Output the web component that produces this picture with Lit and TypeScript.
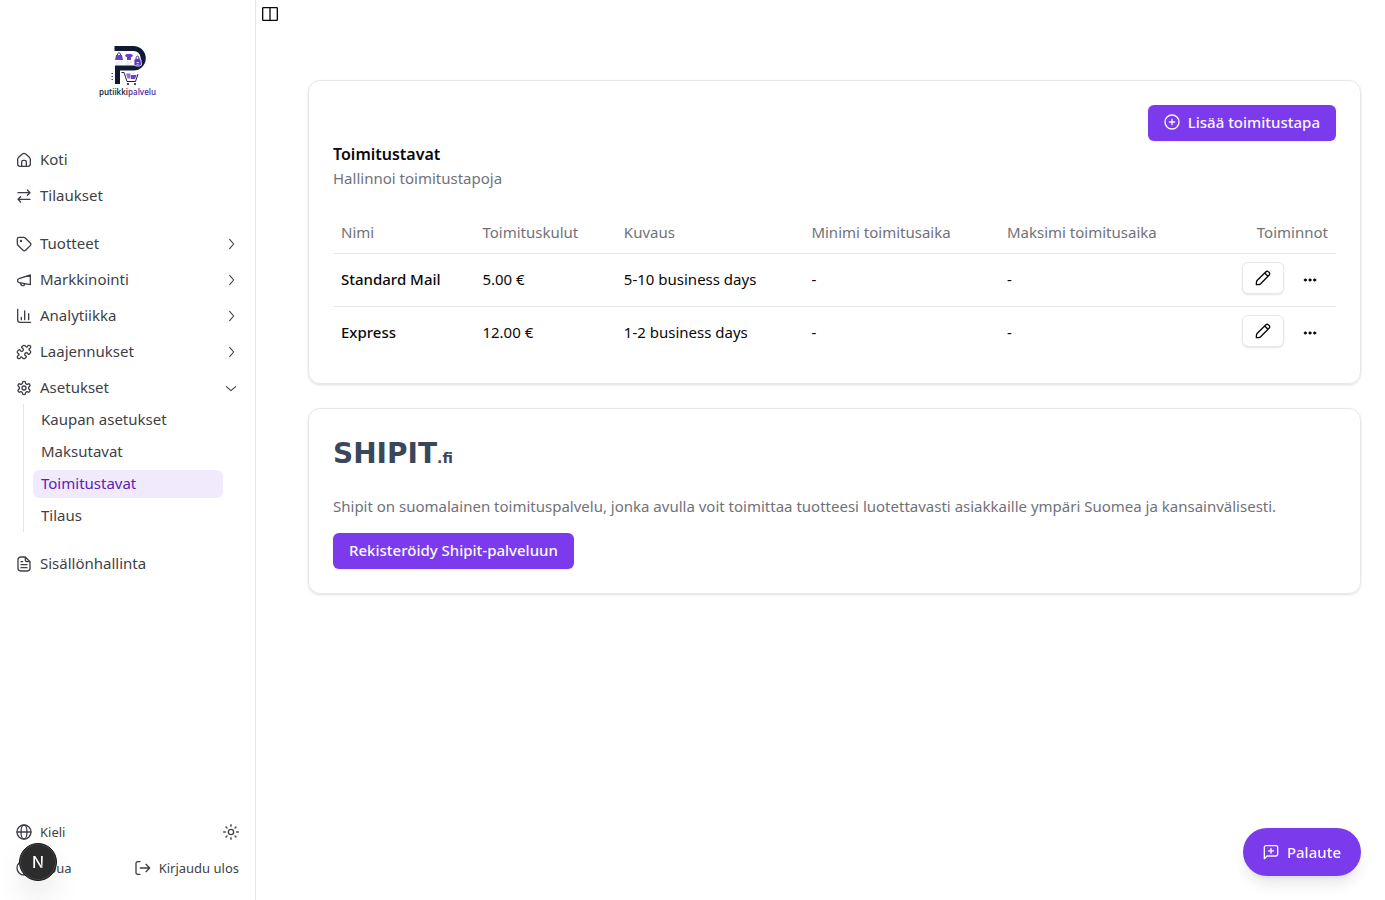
import { LitElement, html, css, svg, nothing, type TemplateResult } from "lit";
import { customElement, property } from "lit/decorators.js";
import { classMap } from "lit/directives/class-map.js";

const ICONS: Record<string, TemplateResult> = {
  home: svg`<path d="M2.500 11c0-1.400.4-2.200 1.500-3.200L9.500 3c1.600-1.300 3.400-1.300 5 0L20 7.800c1.100 1 1.500 1.800 1.500 3.200V18c0 2.500-1 3.500-3.500 3.500H6c-2.500 0-3.500-1-3.500-3.500z"/><path d="M8.500 21.500V15c0-1.700.8-2.500 2.500-2.500h2c1.700 0 2.500.8 2.500 2.500v6.500"/>`,
  swap: svg`<path d="M3 7h18M17 3l4 4-4 4M21 17H3M7 13l-4 4 4 4"/>`,
  tag: svg`<path d="M2 4.500A2.500 2.500 0 0 1 4.500 2h7.200c.8 0 1.500.3 2.100.9l7.600 7.600c1.200 1.200 1.200 2.700 0 3.900l-7 7c-1.200 1.200-2.700 1.200-3.900 0l-7.600-7.600c-.6-.6-.9-1.300-.9-2.100z"/><circle cx="7.500" cy="7.500" r=".8" fill="currentColor"/>`,
  megaphone: svg`<path d="M21.500 4.500v14.500L4.500 16c-1.300-.3-2-1-2-2.200v-1.600c0-1.200.7-1.900 2-2.200z"/><path d="M7 16.500c0 2.500 1 4 3 4s3-1 3-3"/>`,
  chart: svg`<path d="M2.500 2v16c0 2.500 1 3.500 3.500 3.500h16M8 17.500V14M13 17.500V4.500M19 17.500V8.500"/>`,
  puzzle: svg`<path d="M19.439 7.850c-.049.322.059.648.289.878l1.568 1.568c.47.470.706 1.087.706 1.704s-.235 1.233-.706 1.704l-1.611 1.611a.98.98 0 0 1-.837.276c-.470-.070-.802-.480-.968-.925a2.501 2.501 0 1 0-3.214 3.214c.446.166.855.497.925.968a.979.979 0 0 1-.276.837l-1.610 1.610a2.404 2.404 0 0 1-1.705.707 2.402 2.402 0 0 1-1.704-.706l-1.568-1.568a1.026 1.026 0 0 0-.877-.290c-.493.074-.840.504-1.020.968a2.500 2.500 0 1 1-3.237-3.237c.464-.180.894-.527.967-1.020a1.026 1.026 0 0 0-.289-.877l-1.568-1.568A2.402 2.402 0 0 1 1.998 12c0-.617.236-1.234.706-1.704L4.230 8.770c.240-.240.581-.353.917-.303.515.077.877.528 1.073 1.010a2.500 2.500 0 1 0 3.259-3.259c-.482-.196-.933-.558-1.010-1.073-.050-.336.062-.676.303-.917l1.525-1.525A2.402 2.402 0 0 1 12 1.998c.617 0 1.234.236 1.704.706l1.568 1.568c.230.230.556.338.877.290.493-.074.840-.504 1.020-.968a2.500 2.500 0 1 1 3.237 3.237c-.464.180-.894.527-.967 1.020Z"/>`,
  gear: svg`<path d="M12.220 2h-.44a2 2 0 0 0-2 2v.18a2 2 0 0 1-1 1.730l-.43.250a2 2 0 0 1-2 0l-.150-.080a2 2 0 0 0-2.730.730l-.220.380a2 2 0 0 0 .730 2.730l.150.100a2 2 0 0 1 1 1.720v.510a2 2 0 0 1-1 1.740l-.150.090a2 2 0 0 0-.730 2.730l.220.380a2 2 0 0 0 2.730.730l.150-.080a2 2 0 0 1 2 0l.430.250a2 2 0 0 1 1 1.730V20a2 2 0 0 0 2 2h.440a2 2 0 0 0 2-2v-.180a2 2 0 0 1 1-1.730l.430-.250a2 2 0 0 1 2 0l.150.080a2 2 0 0 0 2.730-.730l.220-.390a2 2 0 0 0-.730-2.730l-.150-.080a2 2 0 0 1-1-1.740v-.500a2 2 0 0 1 1-1.740l.150-.090a2 2 0 0 0 .730-2.730l-.220-.380a2 2 0 0 0-2.730-.730l-.150.080a2 2 0 0 1-2 0l-.430-.250a2 2 0 0 1-1-1.730V4a2 2 0 0 0-2-2z"/><circle cx="12" cy="12" r="3"/>`,
  file: svg`<path d="M14 1.500H7a4 4 0 0 0-4 4v13a4 4 0 0 0 4 4h10a4 4 0 0 0 4-4V8.500zM14 1.500v4a3 3 0 0 0 3 3h4M7.500 8.500h2.500M7.500 13h9M7.500 17.500h9"/>`,
  globe: svg`<circle cx="12" cy="12" r="10.500"/><ellipse cx="12" cy="12" rx="4.500" ry="10.500"/><path d="M1.500 12h21"/>`,
  help: svg`<circle cx="12" cy="12" r="10.500"/><path d="M9 9a3 3 0 1 1 4.500 2.600c-1 .6-1.500 1.200-1.500 2.400M12 17v.5"/>`,
  sun: svg`<circle cx="12" cy="12" r="4"/><path d="M12 1v2.500M12 20.500V23M1 12h2.500M20.500 12H23M4.500 4.500l1.500 1.500M18 18l1.500 1.500M4.500 19.500 6 18M18 6l1.500-1.500"/>`,
  logout: svg`<path d="M7.500 2.500H4A2.500 2.500 0 0 0 1.500 5v14A2.500 2.500 0 0 0 4 21.500h3.500M8 12h14M16.500 6.500 22 12l-5.500 5.500"/>`,
  right: svg`<path d="m10 5 6 7-6 7" stroke-width="1.700"/>`,
  down: svg`<path d="m5 10 7 6 7-6" stroke-width="1.700"/>`,
  panel: svg`<rect x="1" y="2.500" width="22" height="19" rx="1"/><path d="M12 2.500v19"/>`,
  plus: svg`<circle cx="12" cy="12" r="10.500"/><path d="M12 8v8M8 12h8"/>`,
  pencil: svg`<path d="M3.500 15.500 16 3c1.300-1.300 3-1.300 4.200-.2l1 1c1.100 1.200 1.100 2.900-.2 4.200L8.500 20.500c-.8.8-1.600 1.200-2.700 1.300l-3.800.2.200-3.800c.1-1.100.5-1.900 1.300-2.700zM14.500 4.500l5 5"/>`,
  dots: svg`<g fill="currentColor" stroke-width="1"><circle cx="5" cy="12" r="1.800"/><circle cx="12" cy="12" r="1.800"/><circle cx="19" cy="12" r="1.800"/></g>`,
  feedback: svg`<path d="M2 22V5a2.500 2.500 0 0 1 2.500-2.500h15A2.500 2.500 0 0 1 22 5v10.500a2.500 2.500 0 0 1-2.500 2.500H6zM12 6.500v7.500M8.200 10.200h7.600"/>`,
};

@customElement("app-icon")
export class AppIcon extends LitElement {
  @property() name = "";
  static styles = css`
    :host { display: block; flex: none; width: 16px; height: 16px; }
    svg { display: block; width: 100%; height: 100%; }
  `;
  render() {
    return html`<svg viewBox="0 0 24 24" fill="none" stroke="currentColor" stroke-width="2"
      stroke-linecap="round" stroke-linejoin="round" aria-hidden="true">${ICONS[this.name]}</svg>`;
  }
}

@customElement("brand-logo")
export class BrandLogo extends LitElement {
  static styles = css`
    :host { display: flex; flex-direction: column; align-items: center; }
    svg { display: block; width: 60px; height: 42px; }
    .word { font: 600 8px/12px "Open Sans", sans-serif; color: #15172f; }
    .accent { color: #4a2fa8; }
  `;
  render() {
    return html`
      <svg viewBox="0 0 60 42" fill="none" aria-hidden="true">
        <path d="M16.500 4.500H35.500a9.750 9.750 0 0 1 0 19.500H19.500v16" stroke="#111a35" stroke-width="5"/>
        <path d="M18 11h6l1 5h-8zM27 11l2-1h4l2 1-1 2h-1v3h-4v-3h-1z" fill="#6941c6"/>
        <path d="M19.500 11c0-3 3-3 3 0" stroke="#33246f"/>
        <path d="M17.500 18h7M17.500 20h4M28 18h6M28 20h4" stroke="#d8d6e2" stroke-width=".8"/>
        <path d="M36 15.500c2-1.500 5-1.500 7 0l.5 5.500c-1.500 1.500-5.500 1.500-7.500 0z" fill="#5b35c4" stroke="#f7f5ff" stroke-width=".8"/>
        <path d="M38 15c0-4 3-4 3 0" stroke="#33246f"/>
        <path d="M38.500 18.500h2.500M38.500 20.300h2" stroke="#fff" stroke-width=".7"/>
        <path d="M23.500 28.500h2.500l3 9h8.500l2.500-7.500" stroke="#1b1f3d" stroke-width="1"/>
        <path d="M28 29.500h4.500v5h-3z" fill="#8d72dc"/><path d="M33 31h5.500l-1.500 4h-4z" fill="#6941c6"/>
        <circle cx="30" cy="40" r="1.100" fill="#1b1f3d"/><circle cx="37" cy="40" r="1.100" fill="#1b1f3d"/>
        <path d="M13.500 29.500H15M13.500 32.500H15M13.500 35.500H15" stroke="#4a3f86"/>
      </svg>
      <span class="word">putiikki<span class="accent">palvelu</span></span>
    `;
  }
}

interface NavItem {
  icon: string;
  label: string;
  group?: boolean;
  children?: string[];
}

const NAV: NavItem[][] = [
  [
    { icon: "home", label: "Koti" },
    { icon: "swap", label: "Tilaukset" },
  ],
  [
    { icon: "tag", label: "Tuotteet", group: true },
    { icon: "megaphone", label: "Markkinointi", group: true },
    { icon: "chart", label: "Analytiikka", group: true },
    { icon: "puzzle", label: "Laajennukset", group: true },
    {
      icon: "gear",
      label: "Asetukset",
      group: true,
      children: ["Kaupan asetukset", "Maksutavat", "Toimitustavat", "Tilaus"],
    },
  ],
  [{ icon: "file", label: "Sisällönhallinta" }],
];

@customElement("side-nav")
export class SideNav extends LitElement {
  @property() active = "";
  static styles = css`
    :host {
      box-sizing: border-box; display: flex; flex-direction: column; flex: none;
      width: 256px; padding: 44px 8px 16px; border-right: 1px solid #e5e7eb; color: #3f3f46;
    }
    brand-logo { margin-bottom: 46px; }
    nav { display: flex; flex-direction: column; gap: 16px; flex: 1; }
    .group { display: flex; flex-direction: column; gap: 4px; }
    .row {
      box-sizing: border-box; display: flex; align-items: center; gap: 8px; width: 100%; height: 32px;
      padding: 0 8px; border: 0; background: none; border-radius: 6px; color: inherit;
      font: inherit; text-align: left; text-decoration: none; cursor: pointer;
    }
    .row span { flex: 1; padding-bottom: 2px; }
    .sub {
      display: flex; flex-direction: column; gap: 4px; list-style: none;
      margin: -4px 24px 0 15px; padding: 2px 0 2px 9px; border-left: 1px solid #e5e7eb;
    }
    .leaf {
      display: block; padding: 3px 8px 5px; line-height: 20px; border-radius: 6px;
      color: inherit; text-decoration: none;
    }
    .leaf.on { background: #f1eafd; color: #5b21b6; }
    .foot { display: flex; flex-direction: column; gap: 4px; font-size: 13px; }
    .foot .row span { padding-bottom: 0; }
    .pair { display: flex; justify-content: space-between; }
    .pair .row { width: auto; }
  `;
  private row(item: NavItem) {
    const body = html`<app-icon name=${item.icon}></app-icon><span>${item.label}</span>`;
    if (!item.group) return html`<a class="row" href="#">${body}</a>`;
    const open = !!item.children;
    return html`
      <button class="row" aria-expanded=${open}>
        ${body}<app-icon name=${open ? "down" : "right"}></app-icon>
      </button>
      ${item.children
        ? html`<ul class="sub">
            ${item.children.map(
              (c) => html`<li><a href="#" class=${classMap({ leaf: true, on: c === this.active })}>${c}</a></li>`,
            )}
          </ul>`
        : nothing}
    `;
  }
  render() {
    return html`
      <brand-logo></brand-logo>
      <nav>${NAV.map((g) => html`<div class="group">${g.map((i) => this.row(i))}</div>`)}</nav>
      <div class="foot">
        <div class="pair">
          <button class="row"><app-icon name="globe"></app-icon><span>Kieli</span></button>
          <button class="row" aria-label="Teema"><app-icon name="sun"></app-icon></button>
        </div>
        <div class="pair">
          <a class="row" href="#"><app-icon name="help"></app-icon><span>Apua</span></a>
          <button class="row"><app-icon name="logout"></app-icon><span>Kirjaudu ulos</span></button>
        </div>
      </div>
    `;
  }
}

const METHODS = [
  { name: "Standard Mail", cost: "5.00 €", text: "5-10 business days", min: "-", max: "-" },
  { name: "Express", cost: "12.00 €", text: "1-2 business days", min: "-", max: "-" },
];

@customElement("app-root")
export class AppRoot extends LitElement {
  static styles = css`
    :host {
      display: flex; min-height: 100vh; background: #fff; color: #09090b;
      font: 15px/20px "Noto Sans", sans-serif;
    }
    button { font: inherit; color: inherit; cursor: pointer; }
    main { display: flex; flex: 1; min-width: 0; align-items: flex-start; }
    .toggle { display: flex; padding: 6px; border: 0; background: none; }
    .content {
      display: flex; flex-direction: column; gap: 24px; flex: 1; min-width: 0; padding: 80px 24px;
    }
    .card {
      padding: 24px; border: 1px solid #e5e7eb; border-radius: 12px;
      box-shadow: 0 1px 3px rgba(0, 0, 0, 0.1), 0 1px 2px -1px rgba(0, 0, 0, 0.1);
    }
    .top { display: flex; justify-content: flex-end; }
    .primary {
      display: inline-flex; align-items: center; gap: 8px; height: 36px; padding: 0 16px 2px;
      box-sizing: border-box; border: 0; border-radius: 6px; background: #7c3aed; color: #f9fafb;
      font-weight: 500; text-decoration: none; box-shadow: 0 1px 2px rgba(0, 0, 0, 0.08);
    }
    h2 { margin: 0; font-size: 16px; line-height: 26px; font-weight: 600; }
    .desc { margin: 0 0 24px; line-height: 22px; color: #71717a; }
    table { width: 100%; table-layout: fixed; border-collapse: separate; border-spacing: 0; }
    th {
      height: 40px; padding: 0 8px 2px; box-sizing: border-box; text-align: left;
      font-weight: 400; color: #71717a; white-space: nowrap;
    }
    td { height: 53px; padding: 0 8px 2px; box-sizing: border-box; border-top: 1px solid #e5e7eb; }
    tr > :last-child { text-align: right; }
    .c1 { width: 14.1%; }
    .c2 { width: 14.1%; }
    .c3 { width: 18.7%; }
    .c4 { width: 19.5%; }
    .c5 { width: 19.5%; }
    .name { font-weight: 500; }
    .actions { display: flex; justify-content: flex-end; gap: 8px; padding-bottom: 2px; }
    .edit, .more {
      display: flex; align-items: center; justify-content: center; box-sizing: border-box;
      height: 32px; padding: 0; border-radius: 6px; background: #fff;
    }
    .edit { width: 42px; border: 1px solid #e5e7eb; box-shadow: 0 1px 2px rgba(0, 0, 0, 0.1); }
    .more { width: 36px; border: 0; padding-top: 4px; }
    .shipit { display: flex; align-items: baseline; height: 40px; color: #3a475b; font: 700 28px/42px "DejaVu Sans", sans-serif; }
    .shipit small { font-size: 14px; }
    .about { margin: 23px 0 17px; color: #71717a; }
    .feedback {
      position: fixed; right: 24px; bottom: 24px; display: flex; align-items: center; gap: 8px;
      height: 48px; padding: 0 20px; border: 0; border-radius: 24px; background: #7c3aed; color: #f9fafb;
      font-weight: 500; box-shadow: 0 10px 15px -3px rgba(0, 0, 0, 0.1), 0 4px 6px -4px rgba(0, 0, 0, 0.1);
    }
    .dev {
      position: fixed; left: 19px; bottom: 19px; width: 38px; height: 38px; padding: 0; border: 1px solid #17171a;
      border-radius: 50%; background: #2c2c2c; box-shadow: inset 0 0 0 1px #45454a, 0 16px 32px -8px rgba(0, 0, 0, 0.24);
      font: 500 16px/36px Inter, sans-serif; color: #fff;
    }
    .dev span {
      display: block; background: linear-gradient(100deg, #fff 58%, #777 64%); color: transparent;
      -webkit-background-clip: text; background-clip: text;
    }
  `;
  render() {
    return html`
      <side-nav active="Toimitustavat"></side-nav>
      <main>
        <button class="toggle" aria-label="Sivupalkki"><app-icon name="panel"></app-icon></button>
        <div class="content">
          <section class="card">
            <div class="top">
              <button class="primary"><app-icon name="plus"></app-icon>Lisää toimitustapa</button>
            </div>
            <h2>Toimitustavat</h2>
            <p class="desc">Hallinnoi toimitustapoja</p>
            <table>
              <thead>
                <tr>
                  <th class="c1">Nimi</th>
                  <th class="c2">Toimituskulut</th>
                  <th class="c3">Kuvaus</th>
                  <th class="c4">Minimi toimitusaika</th>
                  <th class="c5">Maksimi toimitusaika</th>
                  <th>Toiminnot</th>
                </tr>
              </thead>
              <tbody>
                ${METHODS.map(
                  (m) => html`<tr>
                    <td class="name">${m.name}</td>
                    <td>${m.cost}</td>
                    <td>${m.text}</td>
                    <td>${m.min}</td>
                    <td>${m.max}</td>
                    <td>
                      <div class="actions">
                        <button class="edit" aria-label="Muokkaa"><app-icon name="pencil"></app-icon></button>
                        <button class="more" aria-label="Lisää"><app-icon name="dots"></app-icon></button>
                      </div>
                    </td>
                  </tr>`,
                )}
              </tbody>
            </table>
          </section>
          <section class="card">
            <div class="shipit">SHIPIT<small>.fi</small></div>
            <p class="about">
              Shipit on suomalainen toimituspalvelu, jonka avulla voit toimittaa tuotteesi luotettavasti asiakkaille
              ympäri Suomea ja kansainvälisesti.
            </p>
            <a class="primary" href="#">Rekisteröidy Shipit-palveluun</a>
          </section>
        </div>
      </main>
      <button class="feedback"><app-icon name="feedback"></app-icon>Palaute</button>
      <button class="dev" aria-label="Kehitystyökalut"><span>N</span></button>
    `;
  }
}
